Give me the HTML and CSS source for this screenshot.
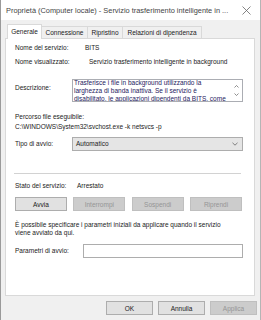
FILE: index.html
```html
<!DOCTYPE html>
<html lang="it">
<head>
  <meta charset="UTF-8">
  <title>Proprietà BITS</title>
  <link rel="stylesheet" href="styles.css">
</head>
<body>
  <div class="window">
    <div class="titlebar">
      <span class="title">Proprietà (Computer locale) - Servizio trasferimento intelligente in ...</span>
      <svg class="close" width="9" height="9" viewBox="0 0 9 9"><path d="M0.5 0.5L8.5 8.5M8.5 0.5L0.5 8.5" stroke="#666" stroke-width="0.8" fill="none"/></svg>
    </div>

    <div class="dialog">
      <div class="tabs">
        <div class="tab active">Generale</div>
        <div class="tab tab-conn">Connessione</div>
        <div class="tab tab-rip">Ripristino</div>
        <div class="tab tab-rel">Relazioni di dipendenza</div>
      </div>

      <div class="panel">
        <div class="field">
          <span class="label">Nome del servizio:</span>
          <span class="value">BITS</span>
        </div>
        <div class="field field-name">
          <span class="label">Nome visualizzato:</span>
          <span class="value">Servizio trasferimento intelligente in background</span>
        </div>

        <div class="field field-desc">
          <span class="label">Descrizione:</span>
          <div class="textbox">
            <div class="textbox-text">
              <div>Trasferisce i file in background utilizzando la</div>
              <div>larghezza di banda inattiva. Se il servizio è</div>
              <div>disabilitato, le applicazioni dipendenti da BITS, come</div>
            </div>
            <div class="scroll">
              <svg width="5" height="3" viewBox="0 0 5 3"><path d="M0.5 2.5L2.5 0.5L4.5 2.5" stroke="#606060" stroke-width="0.7" fill="none"/></svg>
              <svg width="5" height="3" viewBox="0 0 5 3"><path d="M0.5 0.5L2.5 2.5L4.5 0.5" stroke="#606060" stroke-width="0.7" fill="none"/></svg>
            </div>
          </div>
        </div>

        <div class="path-label">Percorso file eseguibile:</div>
        <div class="path">C:\WINDOWS\System32\svchost.exe -k netsvcs -p</div>

        <div class="field field-type">
          <span class="label">Tipo di avvio:</span>
          <div class="combo">
            <span>Automatico</span>
            <svg width="6" height="4" viewBox="0 0 6 4"><path d="M0.5 0.8L3 3.2L5.5 0.8" stroke="#555" stroke-width="0.7" fill="none"/></svg>
          </div>
        </div>

        <hr class="separator">

        <div class="field field-state">
          <span class="label">Stato del servizio:</span>
          <span class="value">Arrestato</span>
        </div>

        <div class="service-buttons">
          <button class="btn">Avvia</button>
          <button class="btn" disabled>Interrompi</button>
          <button class="btn" disabled>Sospendi</button>
          <button class="btn" disabled>Riprendi</button>
        </div>

        <p class="info">È possibile specificare i parametri iniziali da applicare quando il servizio<br>viene avviato da qui.</p>

        <div class="field field-params">
          <span class="label">Parametri di avvio:</span>
          <div class="input"></div>
        </div>
      </div>

      <div class="actions">
        <button class="btn btn-dialog">OK</button>
        <button class="btn btn-dialog">Annulla</button>
        <button class="btn btn-dialog" disabled>Applica</button>
      </div>
    </div>
  </div>
</body>
</html>
```

FILE: styles.css
```css
* {
  box-sizing: border-box;
}
body {
  margin: 0;
  font-family: 'Liberation Sans', Arial, sans-serif;
  font-size: 6.5px;
  color: #1a1a1a;
  background: #f0f0f0;
}
.window {
  width: 261px;
  height: 320px;
  border-left: 1px solid #9a9a9a;
  border-right: 1px solid #b5b5b5;
  background: #f0f0f0;
}
.titlebar {
  height: 20px;
  background: white;
  display: flex;
  align-items: center;
  justify-content: space-between;
  padding: 0 9px 0 5px;
}
.title {
  font-size: 7.4px;
  color: #444;
  white-space: nowrap;
}
.close {
  display: block;
}
.dialog {
  padding: 4px 5px 0 4px;
}
.tabs {
  display: flex;
  align-items: flex-end;
  margin-left: 2px;
  height: 14px;
  position: relative;
  z-index: 1;
}
.tab {
  height: 12px;
  line-height: 11px;
  text-align: center;
  border: 1px solid #d9d9d9;
  border-bottom: none;
  border-left: none;
  background: #f0f0f0;
  white-space: nowrap;
}
.tab.active {
  width: 35px;
  height: 15px;
  line-height: 13px;
  margin-bottom: -1px;
  border-left: 1px solid #d9d9d9;
  background: white;
}
.tab-conn {
  width: 46px;
}
.tab-rip {
  width: 35px;
}
.tab-rel {
  width: 79px;
}
.panel {
  height: 258px;
  background: white;
  border: 1px solid #d9d9d9;
  padding: 4px 11px 0 9px;
}
.field {
  display: flex;
  align-items: center;
  line-height: 10px;
  white-space: nowrap;
}
.field .label {
  width: 70px;
  flex-shrink: 0;
}
.field-name {
  margin-top: 4px;
}
.field-name .label {
  width: 74px;
}
.field-desc {
  margin-top: 12px;
  align-items: flex-start;
}
.field-desc .label {
  width: 57px;
  padding-top: 4px;
}
.textbox {
  flex: 1;
  height: 23px;
  border: 1px solid #abadb3;
  display: flex;
  overflow: hidden;
}
.textbox-text {
  flex: 1;
  color: #1e2160;
  line-height: 8px;
  margin-top: -1.5px;
  padding-left: 1px;
}
.scroll {
  width: 11px;
  display: flex;
  flex-direction: column;
  align-items: center;
  gap: 5px;
  padding-top: 5px;
}
.scroll svg {
  display: block;
}
.path-label {
  margin-top: 10px;
  line-height: 10px;
}
.path {
  line-height: 10px;
  white-space: nowrap;
}
.field-type {
  margin-top: 5px;
}
.field-type .label {
  width: 57px;
}
.combo {
  flex: 1;
  height: 14px;
  background: #e5e5e5;
  border: 1px solid #adadad;
  display: flex;
  align-items: center;
  justify-content: space-between;
  padding: 0 4px 0 3px;
}
.combo svg {
  display: block;
}
.separator {
  margin: 22px 2px 0 -1px;
  border: none;
  border-top: 1px solid #d2d2d2;
  height: 0;
}
.field-state {
  margin-top: 7px;
}
.field-state .label {
  width: 62px;
}
.service-buttons {
  display: flex;
  justify-content: space-between;
  margin-top: 6px;
  padding-right: 1px;
}
.btn {
  width: 52px;
  height: 14px;
  padding: 0;
  font-family: inherit;
  font-size: 6.5px;
  color: #1a1a1a;
  background: #e1e1e1;
  border: 1px solid #adadad;
}
.btn:disabled {
  color: #959595;
  background: #cccccc;
  border-color: #bfbfbf;
}
.info {
  margin: 10px 0 0;
  line-height: 7.5px;
  white-space: nowrap;
}
.field-params {
  margin-top: 8px;
}
.field-params .label {
  width: 68px;
}
.input {
  flex: 1;
  height: 14px;
  border: 1px solid #adadad;
  background: white;
}
.actions {
  display: flex;
  justify-content: flex-end;
  gap: 5px;
  margin: 5px -2px 0 0;
}
.btn-dialog {
  width: 47px;
}
```
